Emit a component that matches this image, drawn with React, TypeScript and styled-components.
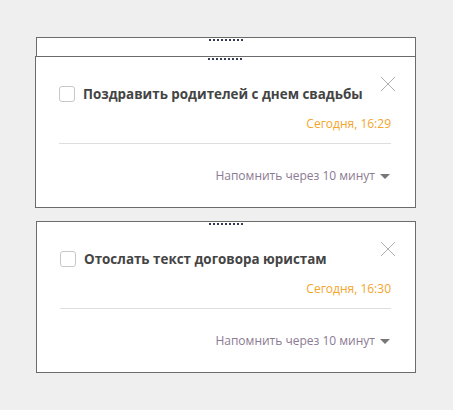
import React from 'react'
import styled, { createGlobalStyle } from 'styled-components'

const GlobalStyle = createGlobalStyle`
  body {
    margin: 0;
    background: #efefef;
    font-family: "Open Sans", "Noto Sans", sans-serif;
  }
`

interface IReminder {
  id: number;
  title: string;
  time: string;
  stacked?: boolean;
}

const reminders: IReminder[] = [
  { id: 1, title: 'Поздравить родителей с днем свадьбы', time: 'Сегодня, 16:29', stacked: true },
  { id: 2, title: 'Отослать текст договора юристам', time: 'Сегодня, 16:30' },
]

const Page = styled.div`
  padding: 37px 0 0 36px;
  width: 380px;
  display: flex;
  flex-direction: column;
  gap: 13px;
`

const Group = styled.div`
  display: flex;
  flex-direction: column;
`

const BackCard = styled.div`
  box-sizing: border-box;
  height: 19px;
  border: 1px solid #6b6b6b;
  border-bottom: none;
  background: #fff;
`

const Handle = styled.div`
  width: 34px;
  height: 2px;
  margin: 1px auto 0;
  background: repeating-linear-gradient(90deg, #353b55 0 2px, transparent 2px 4px);
`

const Card = styled.div<{ $front?: boolean }>`
  position: relative;
  box-sizing: border-box;
  height: 152px;
  margin-left: ${(p) => (p.$front ? '-1px' : '0')};
  width: ${(p) => (p.$front ? '381px' : '380px')};
  border: 1px solid #6b6b6b;
  background: #fff;
  display: flex;
  flex-direction: column;
  padding: 0 24px 0 23px;
`

const TitleRow = styled.div`
  display: flex;
  align-items: center;
  gap: 8px;
  margin-top: 26px;
  height: 16px;
`

const Check = styled.span`
  box-sizing: border-box;
  width: 16px;
  height: 16px;
  border: 1px solid #c8c8c8;
  border-radius: 3px;
  background: #fff;
  flex: none;
`

const Title = styled.span`
  font-size: 13.4px;
  font-weight: 700;
  color: #444;
  line-height: 16px;
  white-space: nowrap;
`

const Close = styled.button`
  position: absolute;
  top: 19px;
  right: 19px;
  width: 16px;
  height: 16px;
  padding: 0;
  border: none;
  background: none;
  display: flex;
`

const Time = styled.div`
  margin-top: 14px;
  text-align: right;
  font-size: 12px;
  line-height: 16px;
  color: #f3a52c;
`

const Divider = styled.div`
  margin-top: 11px;
  height: 1px;
  background: #dedede;
`

const Remind = styled.div`
  margin-top: 24px;
  display: flex;
  justify-content: flex-end;
  align-items: center;
  gap: 5px;
  font-size: 12px;
  line-height: 16px;
  color: #8b7a93;
`

const Caret = styled.span`
  width: 0;
  height: 0;
  border-left: 5px solid transparent;
  border-right: 5px solid transparent;
  border-top: 5px solid #777;
  margin-right: 1px;
`

const CardBody = ({ item, front }: { item: IReminder; front?: boolean }) => (
  <Card $front={front}>
    <Handle />
    <TitleRow>
      <Check />
      <Title>{item.title}</Title>
    </TitleRow>
    <Close aria-label="close">
      <svg width="16" height="16" viewBox="0 0 16 16">
        <path d="M1 1L15 15M15 1L1 15" stroke="#b0b0b0" strokeWidth="1" fill="none" />
      </svg>
    </Close>
    <Time>{item.time}</Time>
    <Divider />
    <Remind>
      Напомнить через 10 минут
      <Caret />
    </Remind>
  </Card>
)

const App = () => {
  return (
    <>
      <GlobalStyle />
      <Page>
        {reminders.map((item) =>
          item.stacked ? (
            <Group key={item.id}>
              <BackCard>
                <Handle />
              </BackCard>
              <CardBody item={item} front />
            </Group>
          ) : (
            <CardBody key={item.id} item={item} />
          )
        )}
      </Page>
    </>
  )
}

export default App
